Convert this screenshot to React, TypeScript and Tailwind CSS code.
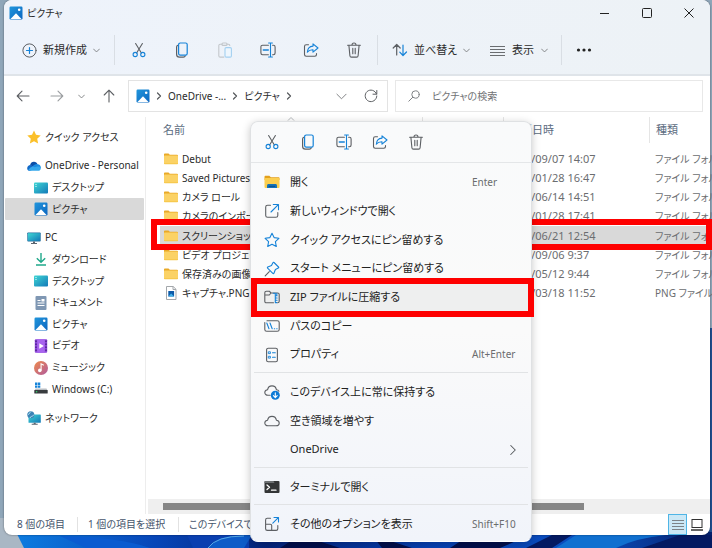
import { useState, type ReactNode } from 'react';
import clsx from 'clsx';

const stroke = {
  fill: 'none',
  strokeLinecap: 'round',
  strokeLinejoin: 'round',
} as const;

const GRAY = '#5c5f63';
const BLUE = '#1683d8';

/* Line icons, 16x16 */

function CutIcon() {
  return (
    <svg className="size-4" viewBox="0 0 16 16" {...stroke} strokeWidth="1.1">
      <path d="M4.6 1.500l5.800 9.500M11.400 1.500L5.600 11" stroke={GRAY} />
      <circle cx="4.200" cy="12.500" r="2.100" stroke={BLUE} />
      <circle cx="11.800" cy="12.500" r="2.100" stroke={BLUE} />
    </svg>
  );
}

function CopyIcon() {
  return (
    <svg className="size-4" viewBox="0 0 16 16" {...stroke} strokeWidth="1.2">
      <path d="M4 3.2C3 3.5 2.6 4 2.6 5v7.2c0 1.8 1 2.9 2.8 2.9h4c1 0 1.6-.3 1.9-1.2" stroke={GRAY} />
      <rect x="4.6" y="1" width="8.6" height="12.2" rx="1.6" stroke={BLUE} />
    </svg>
  );
}

function PasteIcon() {
  return (
    <svg className="size-4" viewBox="0 0 16 16" {...stroke} strokeWidth="1.1">
      <path d="M5 2.3H3.2c-.8 0-1.4.6-1.4 1.4v10c0 .8.6 1.4 1.4 1.4h3.6M10 2.3h1.4c.8 0 1.4.5 1.4 1.2" stroke="#c3c7cb" />
      <rect x="5" y="1" width="5" height="2.4" rx="1" stroke="#c3c7cb" />
      <rect x="8" y="5.6" width="6.4" height="9.5" rx="1.2" stroke="#a3d0f1" fill="#eef6fd" />
    </svg>
  );
}

function RenameIcon() {
  return (
    <svg className="size-4" viewBox="0 0 16 16" {...stroke} strokeWidth="1.1">
      <path d="M8.400 3.200H2.600C1.600 3.200.9 3.900.9 4.900v6.200c0 1 .7 1.700 1.700 1.700h5.800M12.600 3.200h.8c1 0 1.700.7 1.700 1.700v6.200c0 1-.7 1.700-1.700 1.700h-.8" stroke={GRAY} />
      <path d="M3.300 8h5" stroke={BLUE} strokeWidth="1.400" />
      <path d="M10.500 1v14M8.600 1h3.800M8.600 15h3.800" stroke={BLUE} />
    </svg>
  );
}

function ShareIcon() {
  return (
    <svg className="size-4" viewBox="0 0 16 16" {...stroke} strokeWidth="1.1">
      <path d="M5.500 2.800H3.200c-1 0-1.700.7-1.700 1.700v8c0 1 .7 1.700 1.700 1.700h8.600c1 0 1.700-.7 1.700-1.700v-1" stroke={GRAY} />
      <path d="M10 1.800l5 4.200-5 4.200V7.800C7.200 7.700 5.600 8.500 4.300 10.200 4.500 6.800 6.400 4.400 10 4.100z" stroke={BLUE} />
    </svg>
  );
}

function TrashIcon() {
  return (
    <svg className="size-4" viewBox="0 0 16 16" {...stroke} strokeWidth="1.1" stroke={GRAY}>
      <path d="M1.600 3.200h12.800M6 3c0-1.300.8-2 2-2s2 .7 2 2M2.900 3.400l1 10.300c.1.900.7 1.400 1.500 1.400h5.200c.8 0 1.400-.5 1.500-1.400l1-10.300M6.800 6.300v5.500M9.200 6.300v5.500" />
    </svg>
  );
}

function Chevron({ className = 'size-[7px]' }: { className?: string }) {
  return (
    <svg className={className} viewBox="0 0 12 12" {...stroke} stroke="#77797c" strokeWidth="1.500">
      <path d="M1 3.500l5 5 5-5" />
    </svg>
  );
}

function ChevronRight({ className = 'size-2' }: { className?: string }) {
  return (
    <svg className={className} viewBox="0 0 8 8" {...stroke} stroke="#55585c" strokeWidth="1.200">
      <path d="M2.500 1l3 3-3 3" />
    </svg>
  );
}

/* Colour icons for places and files */

function PicturesIcon() {
  return (
    <svg className="size-3.5 shrink-0" viewBox="0 0 14 14">
      <defs>
        <linearGradient id="pic" x1="0" y1="0" x2="1" y2="1">
          <stop offset="0" stopColor="#2196dc" />
          <stop offset="1" stopColor="#0c66c0" />
        </linearGradient>
      </defs>
      <rect x=".5" y=".5" width="13" height="13" rx="1.200" fill="url(#pic)" />
      <path d="M1.500 13L7 7.200 12.500 13z" fill="#fff" />
      <circle cx="10.200" cy="3.800" r="1.300" fill="#fff" />
    </svg>
  );
}

function StarIcon() {
  return (
    <svg className="size-3.5 shrink-0" viewBox="0 0 14 14">
      <path d="M7 .4l2 4.400 4.700.6-3.500 3.300.9 4.800L7 11.200l-4.100 2.300.9-4.800L.3 5.400 5 4.800z" fill="#fbc02a" />
    </svg>
  );
}

function OneDriveIcon() {
  return (
    <svg className="size-3.5 shrink-0" viewBox="0 0 14 14">
      <path d="M3 6.200C3.600 3.500 5.300 2.600 7 2.700c1.800.1 3 1.200 3.500 2.600L7 8z" fill="#0b4fa8" />
      <path d="M.2 9.400C.2 7.300 1.700 6 3.600 6.100L9 9.500l-6 2.300C1.300 11.800.2 10.800.2 9.400z" fill="#1269c8" />
      <path d="M5.500 7.600C7 5.500 9 4.700 10.700 5.300c1.900.2 3.200 1.600 3.200 3.400L9 10z" fill="#1a8be0" />
      <path d="M1.200 11c1.900-2.800 4.300-4 6.400-2.800 2.300-.9 5.200-.9 6.300.5 0 2-1.100 3.100-2.800 3.100H3.200c-.8 0-1.500-.3-2-.8z" fill="#34a8ec" />
    </svg>
  );
}

function DesktopIcon() {
  return (
    <svg className="size-3.5 shrink-0" viewBox="0 0 14 14">
      <defs>
        <linearGradient id="desk" x1="0" y1="0" x2="1" y2="1">
          <stop offset="0" stopColor="#3fd6d4" />
          <stop offset="1" stopColor="#1379b8" />
        </linearGradient>
      </defs>
      <rect y="1.500" width="14" height="11" rx="1" fill="url(#desk)" />
      <path d="M1.500 3.500h1M1.500 5.500h1" stroke="#e6ffff" />
    </svg>
  );
}

function PcIcon() {
  return (
    <svg className="size-3.5 shrink-0" viewBox="0 0 14 14">
      <rect x=".3" y="1.500" width="13.400" height="9" rx=".8" fill="#1f6f9f" />
      <rect x="1" y="2.200" width="12" height="7.600" fill="url(#desk)" />
      <path d="M6 10.500h2v1.500h2v1H4v-1h2z" fill="#5b6570" />
    </svg>
  );
}

function DownloadIcon() {
  return (
    <svg className="size-3.5 shrink-0" viewBox="0 0 14 14" fill="none" stroke="#1fa88a" strokeWidth="1.400">
      <path d="M7 1v9M2.800 6.200L7 10.300l4.200-4.100M2 13h10" />
    </svg>
  );
}

function DocumentIcon() {
  return (
    <svg className="size-3.5 shrink-0" viewBox="0 0 14 14">
      <rect x="1.500" y="0" width="11" height="14" rx="1" fill="#7f97b3" />
      <path d="M3.500 4.500h3M3.500 7h7M3.500 9.500h7" stroke="#fff" />
      <rect x="7.500" y="3" width="3" height="2.500" fill="#fff" />
    </svg>
  );
}

function VideoIcon() {
  return (
    <svg className="size-3.5 shrink-0" viewBox="0 0 14 14">
      <rect x=".8" y=".3" width="12.400" height="13.400" rx="1" fill="#8a44d8" />
      <rect x="3.200" y=".3" width="7.600" height="13.400" fill="#a864ee" />
      <path d="M2 1.500v11M12 1.500v11" stroke="#3f1a78" strokeWidth="1.200" strokeDasharray="1.500 1.500" />
      <path d="M5.300 4.200L9.800 7l-4.500 2.800z" fill="#fff" />
    </svg>
  );
}

function MusicIcon() {
  return (
    <svg className="size-3.5 shrink-0" viewBox="0 0 14 14">
      <defs>
        <linearGradient id="music" x1="0" y1="0" x2="1" y2="1">
          <stop offset="0" stopColor="#ef8b4a" />
          <stop offset="1" stopColor="#b05a9e" />
        </linearGradient>
      </defs>
      <circle cx="7" cy="7" r="7" fill="url(#music)" />
      <circle cx="5.800" cy="9.400" r="1.800" fill="#fff" />
      <path d="M7.100 9.400V2.800l2.700 1.400" stroke="#fff" strokeWidth="1.100" fill="none" />
    </svg>
  );
}

function DriveIcon() {
  return (
    <svg className="size-3.5 shrink-0" viewBox="0 0 14 14">
      <path d="M1 .5h2.400v2.400H1zM3.900.5h2.400v2.400H3.900zM1 3.400h2.400v2.400H1zM3.900 3.400h2.400v2.400H3.900z" fill="#1683d8" />
      <path d="M1.500 6.500h11l1 2H.5z" fill="#b9bec3" />
      <rect x=".3" y="8" width="13.400" height="3.600" rx=".5" fill="#383b3e" />
      <circle cx="2.600" cy="9.800" r=".8" fill="#35d06a" />
    </svg>
  );
}

function NetworkIcon() {
  return (
    <svg className="size-3.5 shrink-0" viewBox="0 0 14 14">
      <rect x="1.500" y="3.500" width="12.300" height="8.300" rx=".6" fill="url(#desk)" />
      <path d="M6.700 11.800h2v1h2v1H4.700v-1h2z" fill="#5b6570" />
      <circle cx="3.800" cy="3.800" r="3.500" fill="#3b83b5" />
      <path d="M1 3.200c1.500.8 1.500-1.700 3-2.600M3 7c.2-1.800 2.500-1.400 3.800-3" stroke="#b6e2f2" fill="none" />
    </svg>
  );
}

function FolderIcon() {
  return (
    <svg className="size-3.5 shrink-0" viewBox="0 0 14 14">
      <path d="M0 2.200c0-.5.300-.8.800-.8h3.700l1.300 1.400H13c.6 0 1 .3 1 .9v1H0z" fill="#e9a927" />
      <rect y="3.600" width="14" height="8.400" rx=".8" fill="#fbd265" />
      <path d="M0 10.900h14v.5c0 .5-.3.800-.8.800H.8c-.5 0-.8-.3-.8-.8z" fill="#f7c94f" />
    </svg>
  );
}

function PngIcon() {
  return (
    <svg className="size-3.5 shrink-0" viewBox="0 0 14 14">
      <path d="M2.500.5h6.700l2.800 2.800v10.200H2.500z" fill="#fff" stroke="#a3a7ab" />
      <path d="M9 .5v3h3" fill="none" stroke="#a3a7ab" />
      <rect x="4.300" y="5" width="5.800" height="5.500" fill="#0d5aa8" />
      <path d="M4.300 10.500L7.200 7.500l2.900 3z" fill="#43b4ea" />
    </svg>
  );
}

/* Context menu icons */

function OpenFolderIcon() {
  return (
    <svg className="size-4" viewBox="0 0 16 16">
      <path d="M.5 2.700c0-.5.400-.9.900-.9h4l1.400 1.500h7.700c.6 0 1 .4 1 1V6H.5z" fill="#e3a01c" />
      <rect x=".5" y="4" width="15" height="10" rx="1" fill="#fbce4f" />
      <path d="M3 14v-2.300c0-1 .6-1.600 1.600-1.600h6.800c1 0 1.600.6 1.600 1.600V14z" fill="#1473b8" />
      <path d="M4.800 12.300h6.400" stroke="#0b4a86" />
    </svg>
  );
}

function NewWindowIcon() {
  return (
    <svg className="size-4" viewBox="0 0 16 16" {...stroke} strokeWidth="1.100">
      <path d="M6.500 2.200H3.600c-1.100 0-1.900.8-1.900 1.900v8.300c0 1.100.8 1.900 1.900 1.900h8.300c1.100 0 1.900-.8 1.900-1.900V9.500" stroke={GRAY} />
      <path d="M7 9l7.300-7.300M9.300 1.500h5.200v5.200" stroke={BLUE} />
    </svg>
  );
}

function StarOutlineIcon() {
  return (
    <svg className="size-4" viewBox="0 0 16 16" {...stroke} stroke={BLUE} strokeWidth="1.100">
      <path d="M8 1.200l2.100 4.400 4.800.7-3.500 3.400.9 4.800L8 12.200l-4.300 2.300.9-4.800L1.100 6.300l4.800-.7z" />
    </svg>
  );
}

function PinIcon() {
  return (
    <svg className="size-4" viewBox="0 0 16 16" {...stroke} strokeWidth="1.100">
      <path d="M5.300 10.700L1.200 14.800" stroke={GRAY} />
      <path d="M10 1.500l4.500 4.500c.4.400.3.900-.2 1.100l-2.900 1.400-1.500 3.700c-.2.500-.7.500-1.100.2L3.600 7.200c-.3-.4-.3-.9.200-1.100l3.700-1.500L8.900 1.700c.2-.5.700-.6 1.100-.2z" stroke={BLUE} />
    </svg>
  );
}

function ZipIcon() {
  return (
    <svg className="size-4" viewBox="0 0 16 16" {...stroke} strokeWidth="1.100">
      <path d="M9.500 13.800H2.400c-1 0-1.600-.6-1.600-1.600V3.800c0-1 .6-1.600 1.600-1.600h2.900L7 4h6.600c1 0 1.600.6 1.600 1.600v6.600c0 1-.6 1.600-1.600 1.600M.8 6h4.500L7 4" stroke={GRAY} />
      <path d="M9.300 4.300h2v9.300h1.500M12.800 4.300v2M11.500 6.800h1.600M11.500 9h1.600M11.500 11.200h1.600" stroke={BLUE} />
    </svg>
  );
}

function PathIcon() {
  return (
    <svg className="size-4" viewBox="0 0 16 16" {...stroke} strokeWidth="1.100">
      <path d="M3 2.700h10.300c1.100 0 1.900.8 1.900 1.900v6.800c0 1.100-.8 1.900-1.900 1.900H2.700c-1.100 0-1.900-.8-1.900-1.900V4.500" stroke={GRAY} />
      <path d="M2.800 5l2.200 5.700M6 5l2.200 5.700M10.300 10.700h.4M12.700 10.700h.4" stroke={BLUE} />
    </svg>
  );
}

function PropertiesIcon() {
  return (
    <svg className="size-4" viewBox="0 0 16 16" {...stroke} strokeWidth="1.100">
      <rect x="2.600" y="1.200" width="10.800" height="13.600" rx="1.600" stroke={GRAY} />
      <path d="M8.500 5.800h2.800M8.500 10.200h2.800" stroke={BLUE} />
      <path d="M4.700 4.800h1.700v1.800H4.700zM4.700 9.300h1.700v1.800H4.700z" stroke={BLUE} strokeWidth=".9" />
    </svg>
  );
}

function CloudIcon() {
  return (
    <svg className="size-4" viewBox="0 0 16 16" {...stroke} stroke={GRAY} strokeWidth="1.100">
      <path d="M4 12.800C2.200 12.800.8 11.700.8 10c0-1.600 1.200-2.700 2.800-2.800C4 4.800 5.700 3.400 8 3.400s4 1.400 4.400 3.800c1.600.1 2.800 1.200 2.800 2.800 0 1.700-1.400 2.800-3.200 2.800z" />
    </svg>
  );
}

function KeepIcon() {
  return (
    <svg className="size-4" viewBox="0 0 16 16" {...stroke} strokeWidth="1.100">
      <path d="M6 11.300H4C2.200 11.300.8 10.200.8 8.500.8 6.900 2 5.800 3.600 5.700 4 3.300 5.700 1.900 8 1.900s4 1.400 4.400 3.800c1.200.1 2.100.6 2.500 1.500" stroke={GRAY} />
      <circle cx="11.300" cy="11.300" r="4.500" fill="#0d7bd6" />
      <path d="M11.300 8.900v4.600M9.400 11.700l1.900 1.900 1.900-1.900" stroke="#fff" />
    </svg>
  );
}

function TerminalIcon() {
  return (
    <svg className="size-4" viewBox="0 0 16 16" {...stroke}>
      <rect x=".5" y="2" width="15" height="12" rx="1" fill="#333536" />
      <path d="M.5 4V3c0-.6.4-1 1-1h8l1 2z" fill="#6d7072" />
      <path d="M3 6l2.500 2.300L3 10.600M7.500 11.200h4.500" stroke="#fff" strokeWidth="1.300" />
    </svg>
  );
}

function MoreOptionsIcon() {
  return (
    <svg className="size-4" viewBox="0 0 16 16" {...stroke} strokeWidth="1.100">
      <path d="M6.500 2.200H3.300c-1 0-1.700.7-1.700 1.700v8.800c0 1 .7 1.700 1.700 1.700h8.800c1 0 1.700-.7 1.700-1.700V9.500M1.600 8.200h4.700c.9 0 1.400.5 1.400 1.400v4.800" stroke={GRAY} />
      <path d="M8.800 7.200l5.500-5.500M10 1.500h4.500V6" stroke={BLUE} />
    </svg>
  );
}

function Wallpaper() {
  return (
    <svg className="absolute inset-x-0 bottom-0 h-[220px] w-full" viewBox="0 0 712 220" preserveAspectRatio="none">
      <defs>
        <linearGradient id="bloom" x1="0" x2="1">
          <stop offset="0" stopColor="#0d7ce0" />
          <stop offset=".2" stopColor="#0746b8" />
          <stop offset=".36" stopColor="#04247c" />
          <stop offset=".6" stopColor="#0641b4" />
          <stop offset=".82" stopColor="#0b4fc0" />
          <stop offset="1" stopColor="#04206c" />
        </linearGradient>
      </defs>
      <path d="M400 0h312v220H400z" fill="#1e4f90" />
      <path d="M0 190h30v30H0z" fill="#a9b7c4" />
      <path d="M16 204h696v16H24z" fill="url(#bloom)" />
      <path d="M60 208q60 1 90 12h-64z" fill="#0a5bd0" />
      <path d="M187 207h62v13h-56z" fill="#0a3fb0" />
      <path d="M208 220q8-12 34-13h10l-8 13z" fill="#0d5cc8" />
      <path d="M208 220q8-12 36-12" fill="none" stroke="#58a9e6" />
      <path d="M300 207l40 13h-60zM372 207l40 13h-30zM470 207h60l-30 13h-50z" fill="#020f4c" />
      <path d="M572 207h-20l-26 13h26zM680 207h32v13h-70z" fill="#041a62" />
      <path d="M576 207h90q-30 3-50 13h-60z" fill="#1070d0" />
    </svg>
  );
}

type Place = {
  label: string;
  icon: ReactNode;
  child?: boolean;
  active?: boolean;
};

const onedrive: Place[] = [
  { label: 'OneDrive - Personal', icon: <OneDriveIcon /> },
  { label: 'デスクトップ', icon: <DesktopIcon />, child: true },
  { label: 'ピクチャ', icon: <PicturesIcon />, child: true, active: true },
];

const pc: Place[] = [
  { label: 'PC', icon: <PcIcon /> },
  { label: 'ダウンロード', icon: <DownloadIcon />, child: true },
  { label: 'デスクトップ', icon: <DesktopIcon />, child: true },
  { label: 'ドキュメント', icon: <DocumentIcon />, child: true },
  { label: 'ピクチャ', icon: <PicturesIcon />, child: true },
  { label: 'ビデオ', icon: <VideoIcon />, child: true },
  { label: 'ミュージック', icon: <MusicIcon />, child: true },
  { label: 'Windows (C:)', icon: <DriveIcon />, child: true },
];

const files = [
  { name: 'Debut', date: '2021/09/07 14:07', type: 'ファイル フォル' },
  { name: 'Saved Pictures', date: '2022/01/28 16:47', type: 'ファイル フォル' },
  { name: 'カメラ ロール', date: '2022/06/14 14:51', type: 'ファイル フォル' },
  { name: 'カメラのインポート', date: '2022/01/28 17:41', type: 'ファイル フォル' },
  { name: 'スクリーンショット', date: '2022/06/21 12:54', type: 'ファイル フォル' },
  { name: 'ビデオ プロジェクト', date: '2021/09/06 9:37', type: 'ファイル フォル' },
  { name: '保存済みの画像', date: '2022/05/12 9:44', type: 'ファイル フォル' },
  { name: 'キャプチャ.PNG', date: '2022/03/18 11:52', type: 'PNG ファイル' },
];

function PlaceRow({ label, icon, child, active }: Place) {
  return (
    <a
      href="#"
      className={clsx(
        'flex flex-1 items-center gap-1 rounded-[1px] whitespace-nowrap',
        child ? 'pl-[29px]' : 'pl-[22px]',
        active && 'bg-[#d9d9d9]',
      )}
    >
      {icon}
      {label}
    </a>
  );
}

function ToolButton({ label, children }: { label: string; children: ReactNode }) {
  return (
    <button aria-label={label} className="flex w-[43px] items-center justify-center">
      {children}
    </button>
  );
}

function MenuItem({
  icon,
  label,
  hint,
  highlighted,
}: {
  icon?: ReactNode;
  label: string;
  hint?: ReactNode;
  highlighted?: boolean;
}) {
  return (
    <button
      className={clsx(
        'relative flex w-full flex-1 items-center pr-[9px] pl-[10px] text-left',
        highlighted && 'bg-[#eeefef]',
      )}
    >
      <span className="mr-[10px] size-4">{icon}</span>
      {label}
      <span className="ml-auto w-[47px] text-[10px] whitespace-nowrap text-[#6a6c6e]">{hint}</span>
      {highlighted && (
        <span className="absolute -inset-y-[5px] -right-[6px] -left-[3px] border-[6px] border-[#fe0000]" />
      )}
    </button>
  );
}

function ContextMenu() {
  return (
    <div className="absolute top-[121px] left-[250px] w-[282px] rounded-lg border border-[#dfe1e3] border-b-white bg-gradient-to-b from-[#f9fafb] via-[#fafafa] to-[#f1f4fa] text-[11px] text-[#222] shadow-[0_2px_8px_rgba(0,0,0,0.22)]">
      <div className="flex h-[41px] items-center border-b border-[#e4e6e8] pl-[3px]">
        <button aria-label="切り取り" className="flex w-9 justify-center"><CutIcon /></button>
        <button aria-label="コピー" className="flex w-9 justify-center"><CopyIcon /></button>
        <button aria-label="名前の変更" className="flex w-9 justify-center"><RenameIcon /></button>
        <button aria-label="共有" className="flex w-9 justify-center"><ShareIcon /></button>
        <button aria-label="削除" className="flex w-9 justify-center"><TrashIcon /></button>
      </div>
      <div className="flex flex-col divide-y divide-[#e1e3e5] px-[3px]">
        <div className="flex h-[210px] flex-col pt-[5px] pb-[3px]">
          <MenuItem icon={<OpenFolderIcon />} label="開く" hint="Enter" />
          <MenuItem icon={<NewWindowIcon />} label="新しいウィンドウで開く" />
          <MenuItem icon={<StarOutlineIcon />} label="クイック アクセスにピン留めする" />
          <MenuItem icon={<PinIcon />} label="スタート メニューにピン留めする" />
          <MenuItem icon={<ZipIcon />} label="ZIP ファイルに圧縮する" highlighted />
          <MenuItem icon={<PathIcon />} label="パスのコピー" />
          <MenuItem icon={<PropertiesIcon />} label="プロパティ" hint="Alt+Enter" />
        </div>
        <div className="flex h-[95px] flex-col pt-[5px] pb-[3px]">
          <MenuItem icon={<KeepIcon />} label="このデバイス上に常に保持する" />
          <MenuItem icon={<CloudIcon />} label="空き領域を増やす" />
          <MenuItem label="OneDrive" hint={<ChevronRight className="ml-auto size-3 stroke-[0.7]" />} />
        </div>
        <div className="flex h-[37px] flex-col pt-[5px] pb-[3px]">
          <MenuItem icon={<TerminalIcon />} label="ターミナルで開く" />
        </div>
        <div className="flex h-[36px] flex-col pt-[5px] pb-[3px]">
          <MenuItem icon={<MoreOptionsIcon />} label="その他のオプションを表示" hint="Shift+F10" />
        </div>
      </div>
    </div>
  );
}

export default function App() {
  const [query, setQuery] = useState('');

  return (
    <div className="relative flex h-screen flex-col overflow-hidden bg-[#8fa6b9] pr-0.5 pb-[13px] pl-1 font-['Noto_Sans','Noto_Sans_CJK_JP',sans-serif] text-[10px] text-[#2b2b2b] [font-feature-settings:'palt']">
      <Wallpaper />

      <div className="relative flex min-h-0 flex-1 flex-col rounded-lg bg-white shadow-[0_0_2px_rgba(0,0,0,0.5)]">
        {/* Title bar */}
        <header className="rounded-t-lg border-b-2 border-[#dfe4e9] bg-gradient-to-r from-[#eef3fb] to-[#edf2f6]">
          <div className="flex h-[26px] items-center gap-1 pl-[5px]">
            <PicturesIcon />
            <h1>ピクチャ</h1>
            <div className="ml-auto flex">
              <button aria-label="最小化" className="flex w-[42px] justify-center">
                <svg className="size-2.5" viewBox="0 0 10 10"><path d="M0 5.500h9" stroke="#222" /></svg>
              </button>
              <button aria-label="最大化" className="flex w-[42px] justify-center">
                <svg className="size-2.5" viewBox="0 0 10 10"><rect x=".5" y=".5" width="9" height="9" rx="1" fill="none" stroke="#222" /></svg>
              </button>
              <button aria-label="閉じる" className="flex w-[42px] justify-center">
                <svg className="size-2.5" viewBox="0 0 10 10"><path d="M.5.5l9 9M9.500.5l-9 9" stroke="#222" /></svg>
              </button>
            </div>
          </div>

          {/* Command bar */}
          <div className="flex h-[48px] pl-[18px] text-[11px]">
            <button className="flex w-[92px] items-center gap-[6px]">
              <svg className="size-[15px]" viewBox="0 0 15 15" {...stroke}>
                <circle cx="7.500" cy="7.500" r="6.600" stroke={GRAY} />
                <path d="M7.500 4.500v6M4.500 7.500h6" stroke={BLUE} strokeWidth="1.200" />
              </svg>
              新規作成
              <Chevron />
            </button>
            <div className="my-[9px] mr-[2px] w-px bg-[#d9dee4]" />
            <ToolButton label="切り取り"><CutIcon /></ToolButton>
            <ToolButton label="コピー"><CopyIcon /></ToolButton>
            <ToolButton label="貼り付け"><PasteIcon /></ToolButton>
            <ToolButton label="名前の変更"><RenameIcon /></ToolButton>
            <ToolButton label="共有"><ShareIcon /></ToolButton>
            <ToolButton label="削除"><TrashIcon /></ToolButton>
            <div className="my-[9px] ml-[2px] w-px bg-[#d9dee4]" />
            <button className="flex w-[98px] items-center gap-[6px] pl-[14px]">
              <svg className="size-4" viewBox="0 0 16 16" {...stroke} strokeWidth="1.200">
                <path d="M4.700 13V2.500M1.200 6l3.500-3.500L8.200 6" stroke={GRAY} />
                <path d="M11 3v10.500M7.800 10.200l3.200 3.300 3.500-3.500" stroke={BLUE} />
              </svg>
              並べ替え
              <Chevron />
            </button>
            <button className="flex w-[85px] items-center gap-[7px] pl-[14px]">
              <svg className="size-[15px]" viewBox="0 0 15 15" stroke="#6a6d70"><path d="M0 3.500h15M0 6.500h15M0 9.500h15M0 12.500h15" /></svg>
              表示
              <Chevron />
            </button>
            <div className="my-[9px] w-px bg-[#d9dee4]" />
            <ToolButton label="その他">
              <svg className="size-4" viewBox="0 0 16 16" fill="#222">
                <circle cx="2.500" cy="8" r="1.600" /><circle cx="8" cy="8" r="1.600" /><circle cx="13.500" cy="8" r="1.600" />
              </svg>
            </ToolButton>
          </div>
        </header>

        {/* Address bar */}
        <div className="flex items-center py-1 pr-[7px]">
          <nav className="flex w-[124px] shrink-0 items-center pl-3">
            <button aria-label="戻る" className="w-[34px]">
              <svg className="size-3.5" viewBox="0 0 14 14" {...stroke} stroke={GRAY} strokeWidth="1.100"><path d="M13 7H1.500M6 2.200L1.200 7 6 11.800" /></svg>
            </button>
            <button aria-label="進む" className="w-7">
              <svg className="size-3.5" viewBox="0 0 14 14" {...stroke} stroke="#9a9da0" strokeWidth="1.100"><path d="M1 7h11.500M8 2.200L12.800 7 8 11.800" /></svg>
            </button>
            <button aria-label="最近表示した場所" className="w-6"><Chevron /></button>
            <button aria-label="上へ">
              <svg className="size-3.5" viewBox="0 0 14 14" {...stroke} stroke={GRAY} strokeWidth="1.100"><path d="M7 13V1.500M2.200 6L7 1.200 11.800 6" /></svg>
            </button>
          </nav>
          <div className="flex h-8 w-[260px] shrink-0 items-center gap-[5px] border border-[#e3e3e3] px-[7px]">
            <PicturesIcon />
            <ChevronRight />
            <a href="#">OneDrive -...</a>
            <ChevronRight />
            <a href="#">ピクチャ</a>
            <ChevronRight />
            <button aria-label="履歴" className="mr-3 ml-auto"><Chevron className="size-[11px] stroke-1" /></button>
            <button aria-label="更新">
              <svg className="mr-[2px] size-3.5" viewBox="0 0 14 14" {...stroke} stroke={GRAY}><path d="M12.500 5A5.800 5.800 0 1 0 12.800 7M12.800 1.500v3.700H9" /></svg>
            </button>
          </div>
          <label className="ml-[7px] flex h-8 min-w-0 flex-1 items-center gap-3 border border-[#e8e8e8] px-3">
            <svg className="size-3 shrink-0" viewBox="0 0 12 12" {...stroke} stroke="#808386"><circle cx="7.500" cy="4.500" r="3.700" /><path d="M4.800 7.200L.8 11.200" /></svg>
            <input
              type="text"
              aria-label="検索"
              placeholder="ピクチャの検索"
              value={query}
              onChange={(e) => setQuery(e.target.value)}
              className="min-w-0 flex-1 outline-none placeholder:text-[#707275]"
            />
          </label>
        </div>

        <div className="flex min-h-0 flex-1 pt-px">
          {/* Navigation pane */}
          <nav className="flex w-[142px] shrink-0 flex-col gap-[7px] border-r border-[#ededed] px-px pt-[9px]">
            <div className="flex h-[22px]">
              <PlaceRow label="クイック アクセス" icon={<StarIcon />} />
            </div>
            <div className="flex h-[65px] flex-col">
              {onedrive.map((place) => <PlaceRow key={place.label} {...place} />)}
            </div>
            <div className="flex h-[173px] flex-col">
              {pc.map((place) => <PlaceRow key={place.label} {...place} />)}
            </div>
            <div className="flex h-[22px]">
              <PlaceRow label="ネットワーク" icon={<NetworkIcon />} />
            </div>
          </nav>

          {/* File list */}
          <main className="flex min-w-0 flex-1 flex-col justify-between pl-[2px]">
            <div className="pl-3">
              <table className="h-[186px] w-full table-fixed text-left whitespace-nowrap">
                <thead>
                  <tr className="h-8 align-top text-[11px] text-[#5b6b80]">
                    <th className="relative w-[262px] p-0 font-normal">
                      <div className="flex h-[26px] items-center pl-[3px]">名前</div>
                      <svg className="absolute top-0 left-[127px] h-1 w-2" viewBox="0 0 8 4" fill="none" stroke="#b5b8bb"><path d="M1 3.500l3-3 3 3" /></svg>
                    </th>
                    <th className="w-[81px] p-0 font-normal"><div className="flex h-[26px] items-center border-l border-[#e5e5e5] pl-[6px]">状態</div></th>
                    <th className="w-[146px] p-0 font-normal"><div className="flex h-[26px] items-center border-l border-[#e5e5e5] pl-[6px]">更新日時</div></th>
                    <th className="p-0 font-normal"><div className="flex h-[26px] items-center border-l border-[#e5e5e5] pl-[6px]">種類</div></th>
                  </tr>
                </thead>
                <tbody>
                  {files.map((file) => {
                    const selected = file.name === 'スクリーンショット';
                    return (
                      <tr key={file.name} className={clsx('text-[#6b6d70]', selected && 'relative bg-[#d9d9d9]')}>
                        <td className="p-0 pl-1 text-[#2b2b2b]">
                          <div className="flex items-center gap-1 leading-4">
                            {file.name.endsWith('.PNG') ? <PngIcon /> : <FolderIcon />}
                            {file.name}
                          </div>
                        </td>
                        <td className="p-0" />
                        <td className="p-0 pl-[3px] text-[11px] leading-4">{file.date}</td>
                        <td className="p-0 pl-[6px] leading-4">
                          {file.type}
                          {selected && <div className="absolute -top-[7px] -right-[2px] -bottom-[5px] -left-[9px] border-[6px] border-[#fe0000]" />}
                        </td>
                      </tr>
                    );
                  })}
                </tbody>
              </table>
            </div>
            <div className="flex h-[15px] items-center bg-[#efefef] pl-[15px]">
              <div className="h-[7px] w-[77%] bg-[#868686]" />
            </div>
          </main>
        </div>

        {/* Status bar */}
        <footer className="flex h-[21px] items-center pl-[13px] whitespace-nowrap text-[#44536b]">
          <span className="w-[60px]">8 個の項目</span>
          <span className="w-[101px] border-l border-[#e2e2e2] pl-[10px]">1 個の項目を選択</span>
          <span className="border-l border-[#e2e2e2] pl-[10px]">このデバイスで使用可能</span>
          <div className="ml-auto flex h-full pr-1">
            <button aria-label="詳細" className="flex w-[19px] items-center justify-center border border-[#4fb5e6] bg-[#cbe8f6]">
              <svg className="size-3" viewBox="0 0 12 12" stroke="#7c8388"><path d="M0 1.500h12M0 4.500h12M0 7.500h12M0 10.500h12" /></svg>
            </button>
            <button aria-label="大アイコン" className="flex w-[19px] items-center justify-center">
              <svg className="size-3" viewBox="0 0 12 12" fill="none" stroke="#333"><rect x="1" y=".5" width="10" height="8" /><path d="M0 11h12" strokeWidth="1.500" /></svg>
            </button>
          </div>
        </footer>
      </div>

      <ContextMenu />
    </div>
  );
}
